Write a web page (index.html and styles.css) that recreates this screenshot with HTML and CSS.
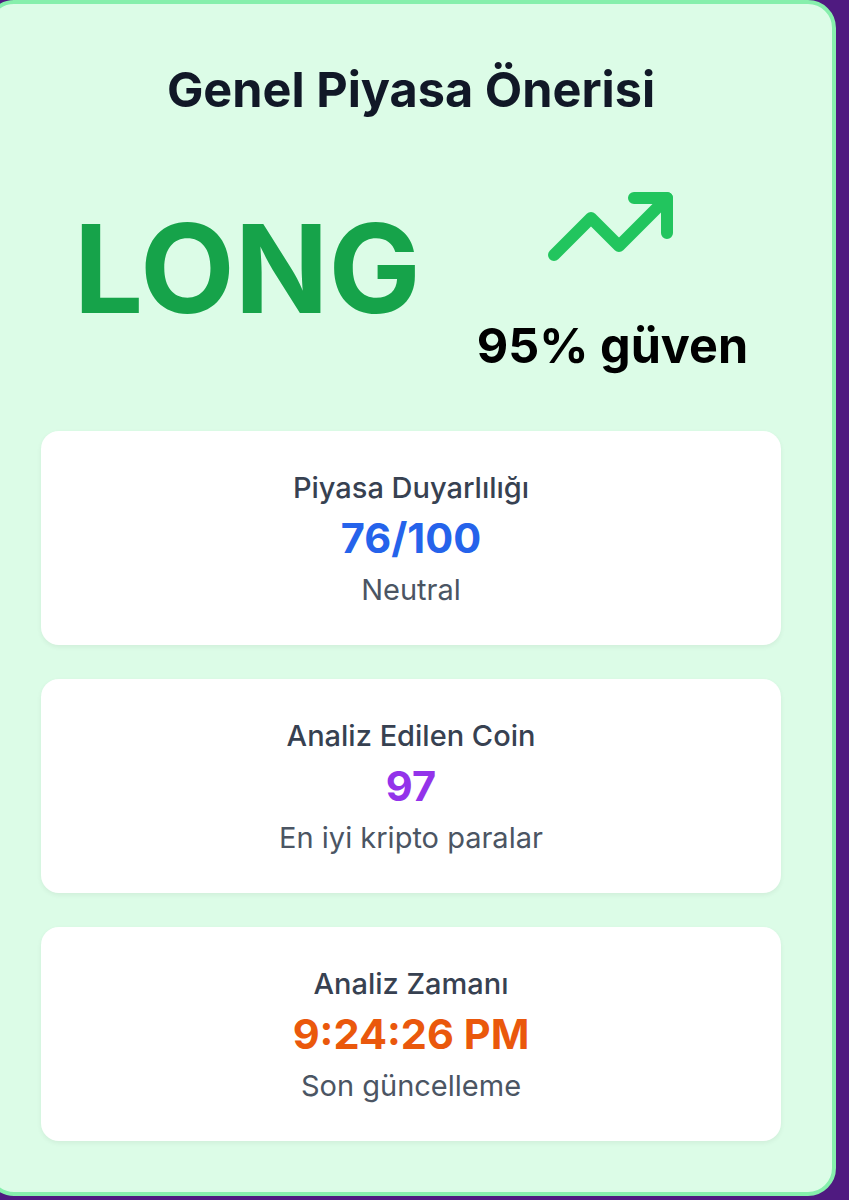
FILE: index.html
```html
<!DOCTYPE html>
<html lang="tr">
<head>
    <meta charset="UTF-8">
    <meta name="viewport" content="width=device-width, initial-scale=1.0">
    <title>Genel Piyasa Önerisi</title>
    <link rel="stylesheet" href="styles.css">
</head>
<body>
    <div class="panel">
        <h1 class="panel-title">Genel Piyasa Önerisi</h1>
        <div class="signal">
            <div class="signal-word">LONG</div>
            <div class="signal-side">
                <svg class="signal-icon" viewBox="0 0 134 80" width="134" height="80" fill="none" stroke="#22c55e" stroke-width="12" stroke-linecap="round" stroke-linejoin="round">
                    <path d="M6 65 L43 28 L71 56 L119 8"/>
                    <path d="M86 8 H119 V43"/>
                </svg>
                <div class="signal-confidence">95% güven</div>
            </div>
        </div>
        <div class="stat-card">
            <div class="stat-label">Piyasa Duyarlılığı</div>
            <div class="stat-value stat-blue">76/100</div>
            <div class="stat-note">Neutral</div>
        </div>
        <div class="stat-card">
            <div class="stat-label">Analiz Edilen Coin</div>
            <div class="stat-value stat-purple">97</div>
            <div class="stat-note">En iyi kripto paralar</div>
        </div>
        <div class="stat-card">
            <div class="stat-label">Analiz Zamanı</div>
            <div class="stat-value stat-orange">9:24:26 PM</div>
            <div class="stat-note">Son güncelleme</div>
        </div>
    </div>
</body>
</html>
```

FILE: styles.css
```css
body, html {
    margin: 0;
    padding: 0;
    height: 1200px;
    overflow: hidden;
    font-family: 'Inter', 'Liberation Sans', sans-serif;
    background-color: #4f1a80;
}
.panel {
    box-sizing: border-box;
    width: 850px;
    height: 1196px;
    margin: 0 0 0 -14px;
    padding: 0 51px;
    background-color: #dcfce7;
    border: 4px solid #86efac;
    border-radius: 28px;
}
.panel-title {
    margin: 56px 0 0;
    font-size: 48.6px;
    line-height: 60px;
    font-weight: 700;
    text-align: center;
    color: #111827;
}
.signal {
    display: flex;
    justify-content: center;
    align-items: center;
    gap: 56px;
    margin: 70px 0 57px;
}
.signal-word {
    font-size: 123px;
    line-height: 122px;
    font-weight: 700;
    color: #16a34a;
    margin-bottom: 26px;
}
.signal-side {
    display: flex;
    flex-direction: column;
    align-items: center;
}
.signal-icon {
    display: block;
    margin: 0 0 48px 6px;
}
.signal-confidence {
    font-size: 48.5px;
    line-height: 56px;
    font-weight: 700;
    color: #000;
}
.stat-card {
    height: 214px;
    box-sizing: border-box;
    padding: 36px 0 0;
    margin-bottom: 34px;
    background-color: #fff;
    border-radius: 18px;
    box-shadow: 0 2px 5px rgba(0, 0, 0, 0.06);
    text-align: center;
}
.stat-label {
    font-size: 29px;
    line-height: 41px;
    font-weight: 500;
    color: #374151;
}
.stat-value {
    font-size: 41.5px;
    line-height: 60px;
    font-weight: 700;
}
.stat-blue { color: #2563eb; }
.stat-purple { color: #9333ea; }
.stat-orange { color: #ea580c; }
.stat-note {
    font-size: 29px;
    line-height: 44px;
    color: #4b5563;
}
```
